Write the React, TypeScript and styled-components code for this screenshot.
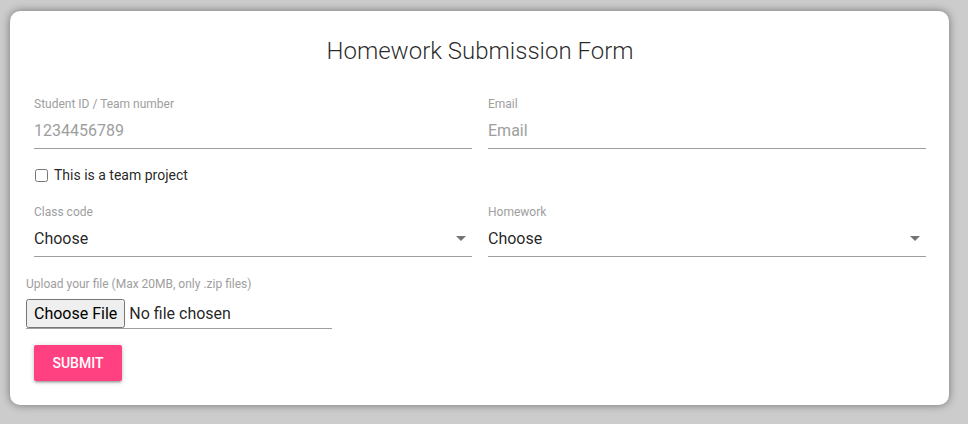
import React from "react";
import styled, { createGlobalStyle } from "styled-components";

const Global = createGlobalStyle`
  html, body { margin: 0; padding: 0; background: #cccccc; }
  body { font-family: Roboto, "Liberation Sans", sans-serif; }
  * { box-sizing: border-box; }
`;

const Page = styled.div`
  padding: 11px 0 0 10px;
  min-height: 424px;
`;

const Card = styled.form`
  width: 939px;
  background: #fff;
  border-radius: 10px;
  box-shadow: 0 0 8px rgba(0, 0, 0, 0.45);
  padding: 24px 23px 24px 24px;
`;

const Title = styled.h1`
  margin: 0 0 29px;
  font-size: 24px;
  line-height: 32px;
  font-weight: 300;
  text-align: center;
  color: rgba(0, 0, 0, 0.85);
`;

const Row = styled.div`
  display: grid;
  grid-template-columns: 438px 438px;
  column-gap: 16px;
`;

const Field = styled.div`
  display: flex;
  flex-direction: column;
  position: relative;
`;

const Label = styled.label<{ $shift?: number }>`
  font-size: 12px;
  line-height: 14px;
  color: #9e9e9e;
  padding-top: ${(p) => p.$shift ?? 0}px;
`;

const TextInput = styled.input`
  height: 38px;
  padding: 2px 0 0;
  border: none;
  border-bottom: 1px solid #9e9e9e;
  font-family: Roboto, "Liberation Sans", sans-serif;
  font-size: 16px;
  color: rgba(0, 0, 0, 0.87);
  outline: none;
  background: transparent;
  &::placeholder { color: #9e9e9e; }
`;

const CheckRow = styled.label`
  display: flex;
  align-items: center;
  height: 20px;
  margin: 16px 0 19px;
  font-size: 14px;
  color: rgba(0, 0, 0, 0.87);
`;

const Check = styled.input`
  width: 13px;
  height: 13px;
  margin: 0 6px 0 1px;
`;

const Select = styled.select`
  appearance: none;
  -webkit-appearance: none;
  height: 38px;
  padding: 2px 0 0;
  border: none;
  border-radius: 0;
  border-bottom: 1px solid #9e9e9e;
  font-family: Roboto, "Liberation Sans", sans-serif;
  font-size: 16px;
  color: rgba(0, 0, 0, 0.87);
  background: transparent;
  outline: none;
`;

const Arrow = styled.svg`
  position: absolute;
  right: 6px;
  top: 32px;
  width: 10px;
  height: 5px;
  pointer-events: none;
`;

const Upload = styled.div`
  display: flex;
  flex-direction: column;
  align-items: flex-start;
  margin: 20px 0 0 -8px;
`;

const FileInput = styled.input`
  margin-top: 8px;
  width: 306px;
  height: 30px;
  border: none;
  border-bottom: 1px solid #9e9e9e;
  font-family: Roboto, "Liberation Sans", sans-serif;
  font-size: 16px;
  color: rgba(0, 0, 0, 0.87);
  &::file-selector-button {
    font-family: Roboto, "Liberation Sans", sans-serif;
    font-size: 16px;
    height: 29px;
    margin-right: 4px;
    padding: 0 6px;
  }
`;

const Submit = styled.button`
  margin-top: 16px;
  width: 88px;
  height: 36px;
  border: none;
  border-radius: 2px;
  background: #ff4081;
  color: #fff;
  font-family: Roboto, "Liberation Sans", sans-serif;
  font-size: 14px;
  font-weight: 500;
  text-transform: uppercase;
  box-shadow: 0 2px 2px 0 rgba(0, 0, 0, 0.14), 0 3px 1px -2px rgba(0, 0, 0, 0.12),
    0 1px 5px 0 rgba(0, 0, 0, 0.2);
`;

const SelectField: React.FC<{ label: string }> = ({ label }) => (
  <Field>
    <Label $shift={1}>{label}</Label>
    <Select defaultValue="">
      <option value="">Choose</option>
    </Select>
    <Arrow viewBox="0 0 10 5">
      <path d="M0 0 L10 0 L5 5 Z" fill="#757575" />
    </Arrow>
  </Field>
);

export default function App() {
  return (
    <>
      <Global />
      <Page>
        <Card onSubmit={(e) => e.preventDefault()}>
          <Title>Homework Submission Form</Title>
          <Row>
            <Field>
              <Label $shift={1}>Student ID / Team number</Label>
              <TextInput placeholder="1234456789" />
            </Field>
            <Field>
              <Label $shift={1}>Email</Label>
              <TextInput placeholder="Email" />
            </Field>
          </Row>
          <CheckRow>
            <Check type="checkbox" />
            This is a team project
          </CheckRow>
          <Row>
            <SelectField label="Class code" />
            <SelectField label="Homework" />
          </Row>
          <Upload>
            <Label>Upload your file (Max 20MB, only .zip files)</Label>
            <FileInput type="file" accept=".zip" />
          </Upload>
          <Submit type="submit">Submit</Submit>
        </Card>
      </Page>
    </>
  );
}
